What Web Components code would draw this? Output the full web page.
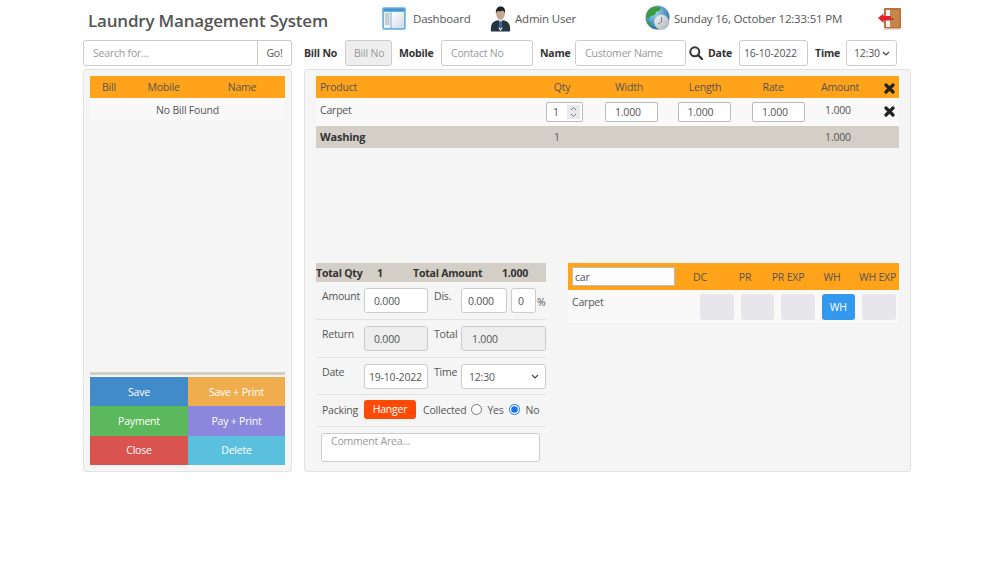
<!DOCTYPE html>
<html>
<head>
<meta charset="utf-8">
<title>Laundry Management System</title>
<style>
    body {
        margin: 0;
        background: #fff;
        color: #555;
        font: 10.5px "Open Sans", "Liberation Sans", sans-serif;
        letter-spacing: -.2px;
    }
</style>
</head>
<body>
<laundry-app></laundry-app>

<script>
// shared by every shadow root that holds form fields
const chevron = `url("data:image/svg+xml,%3Csvg xmlns='http://www.w3.org/2000/svg' width='8' height='5'%3E%3Cpath d='M1 1l3 3 3-3' fill='none' stroke='%23444' stroke-width='1.2'/%3E%3C/svg%3E")`;

const fieldCss = `
    * { box-sizing: border-box; }
    input, select, textarea {
        font: inherit;
        letter-spacing: inherit;
        color: #555;
        background: #fff;
        border: 1px solid #ccc;
        border-radius: 3px;
        height: 25px;
        padding: 0 9px;
        margin: 0;
        outline: none;
    }
    select {
        appearance: none;
        padding: 0 4px 0 7px;
        background: #fff ${chevron} no-repeat right 6px center;
    }
    input::placeholder, textarea::placeholder { color: #999; opacity: 1; }
    input:disabled { background: #eee; }
`;

const icons = {
    dashboard: `<svg width="24" height="23" viewBox="0 0 24 23">
        <defs><linearGradient id="d" x1="0" y1="0" x2="1" y2="1"><stop offset="0" stop-color="#fff"/><stop offset="1" stop-color="#cfdbe6"/></linearGradient></defs>
        <rect x=".5" y=".5" width="23" height="22" rx="1.5" fill="#6fb3e0" stroke="#8fc3e6"/>
        <rect x="1.5" y="1.5" width="21" height="2.5" fill="#3f97d6"/>
        <rect x="2" y="5" width="6.5" height="16" fill="#eef3f6"/>
        <rect x="9.5" y="5" width="12.5" height="16" fill="url(#d)"/>
        <path d="M3 7h4.5M3 9h4.5M3 11h4.5M3 13h4.5M3 15h4.5M3 17h4.5" stroke="#9aa7b2" stroke-width="1"/>
    </svg>`,
    user: `<svg width="21" height="26" viewBox="0 0 21 26">
        <path d="M1 25.5c-.6-6 .8-9.6 5.6-11l3.900-1 3.900 1c4.800 1.400 6.200 5 5.600 11z" fill="#26343f"/>
        <path d="M8 13.500h5l-1.600 3 1 6-1.900 2.500-1.900-2.500 1-6z" fill="#dfe7ee"/>
        <path d="M9.600 15h1.800l.6 6-1.500 2-1.500-2z" fill="#2a5f8f"/>
        <ellipse cx="10.500" cy="8" rx="4.300" ry="5.500" fill="#c9a58c"/>
        <path d="M6 8c-.8-5 1.500-7.500 4.700-7.500S15.800 3 15 8c-.5-2-1.200-3-2.200-3.400-1.700.7-3.900.7-5 .4C6.700 5.500 6.300 6.500 6 8z" fill="#1d2226"/>
    </svg>`,
    globe: `<svg width="26" height="26" viewBox="0 0 26 26">
        <defs>
            <radialGradient id="g" cx=".4" cy=".3" r=".8"><stop offset="0" stop-color="#9fd6ee"/><stop offset="1" stop-color="#15609f"/></radialGradient>
            <linearGradient id="c" x1="0" y1="0" x2="1" y2="1"><stop offset="0" stop-color="#f4f6f7"/><stop offset="1" stop-color="#a9b2b8"/></linearGradient>
        </defs>
        <circle cx="12.5" cy="12.5" r="12" fill="url(#g)"/>
        <path d="M7 2.500c3-1 7-1 9 .5l-2 3-3 1-1 3-4 1-3 3-1.500-2C1.500 8 3.500 4 7 2.500zM2 16l3 1 1 4 2 2.500C5 22.500 3 19.500 2 16z" fill="#3f9a3c"/>
        <circle cx="16.500" cy="17" r="7.500" fill="url(#c)" stroke="#9aa3a9" stroke-width=".5"/>
        <path d="M16.500 12v5l-3.500 2" fill="none" stroke="#7d868c" stroke-width="1"/>
    </svg>`,
    door: `<svg width="24" height="24" viewBox="0 0 24 24">
        <rect x="6" y="1" width="17" height="20.500" rx="1" fill="#b8713a"/>
        <rect x="8" y="3" width="4" height="17" fill="#eceff0"/>
        <path d="M12 3h9.500v17H12z" fill="#c98449"/>
        <circle cx="14.500" cy="12" r="1" fill="#6d3f1b"/>
        <path d="M0 11l5.500-4.500V9H13v4.500H5.500V16z" fill="#e3202b"/>
        <path d="M5 22.500h18" stroke="#ddd" stroke-width="1"/>
    </svg>`,
    search: `<svg width="14" height="14" viewBox="0 0 14 14">
        <circle cx="5.800" cy="5.800" r="4.500" fill="none" stroke="#333" stroke-width="2"/>
        <path d="M9 9l4 4" stroke="#333" stroke-width="2.400" stroke-linecap="round"/>
    </svg>`,
    cross: `<svg width="11" height="11" viewBox="0 0 11 11">
        <path d="M2 2l7 7M9 2l-7 7" stroke="#222" stroke-width="3.200" stroke-linecap="round"/>
    </svg>`
};

class AppHeader extends HTMLElement {
    connectedCallback() {
        this.attachShadow({ mode: 'open' }).innerHTML = `
            <style>
                :host {
                    display: flex;
                    align-items: center;
                    height: 40px;
                    padding-left: 5px;
                    font-size: 11.5px;
                    color: #555;
                }
                h1 {
                    margin: 0;
                    width: 294px;
                    font-size: 17px;
                    font-weight: 600;
                    letter-spacing: -.2px;
                    color: #555;
                    white-space: nowrap;
                }
                .item { display: flex; align-items: center; white-space: nowrap; }
                .item svg { display: block; flex: none; }
                .dash { width: 108px; gap: 7px; margin-top: -3px; }
                .user { width: 155px; gap: 4px; margin-top: -3px; }
                .clock { width: 233px; gap: 3px; margin-top: -4px; }
                .door { margin-top: -3px; }
            </style>
            <h1>Laundry Management System</h1>
            <div class="item dash">${icons.dashboard}<span>Dashboard</span></div>
            <div class="item user">${icons.user}<span>Admin User</span></div>
            <div class="item clock">${icons.globe}<span>Sunday 16, October 12:33:51 PM</span></div>
            <div class="item door">${icons.door}</div>
        `;
    }
}

class FilterBar extends HTMLElement {
    connectedCallback() {
        this.attachShadow({ mode: 'open' }).innerHTML = `
            <style>
                ${fieldCss}
                :host {
                    display: flex;
                    align-items: center;
                    height: 26px;
                }
                .search { display: flex; width: 209px; margin-right: 12px; }
                .search input { flex: 1; min-width: 0; border-radius: 3px 0 0 3px; height: 26px; }
                .go {
                    width: 34px;
                    height: 26px;
                    border: 1px solid #ccc;
                    border-left: 0;
                    border-radius: 0 3px 3px 0;
                    text-align: center;
                    line-height: 24px;
                }
                b { color: #333; white-space: nowrap; flex: none; }
                input, select { height: 26px; flex: none; }
                svg { display: block; flex: none; margin: 0 5px 0 3px; }
            </style>
            <div class="search"><input placeholder="Search for..."><div class="go">Go!</div></div>
            <b style="width:41px">Bill No</b>
            <input disabled placeholder="Bill No" style="width:47px;margin-right:7px;padding:0 0 0 8px">
            <b style="width:42px">Mobile</b>
            <input placeholder="Contact No" style="width:92px;margin-right:7px">
            <b style="width:35px">Name</b>
            <input placeholder="Customer Name" style="width:111px">
            ${icons.search}
            <b style="width:31px">Date</b>
            <input value="16-10-2022" style="width:69px;padding:0 4px;margin-right:7px">
            <b style="width:31px">Time</b>
            <select style="width:51px"><option>12:30</option></select>
        `;
    }
}

class ActionButton extends HTMLElement {
    connectedCallback() {
        this.attachShadow({ mode: 'open' }).innerHTML = `
            <style>
                :host {
                    display: flex;
                    align-items: center;
                    justify-content: center;
                    color: #fff;
                    background: var(--bg);
                }
            </style>
            <slot></slot>
        `;
    }
}

class BillList extends HTMLElement {
    connectedCallback() {
        this.attachShadow({ mode: 'open' }).innerHTML = `
            <style>
                * { box-sizing: border-box; }
                :host {
                    display: flex;
                    flex-direction: column;
                    width: 209px;
                    padding: 6px 6px 6px;
                    background: #f5f5f5;
                    border: 1px solid #e3e3e3;
                    border-radius: 3px;
                }
                .head, .empty { width: 195px; }
                .head {
                    display: grid;
                    grid-template-columns: 38px 71px 86px;
                    height: 22px;
                    line-height: 22px;
                    text-align: center;
                    background: #ffa31a;
                }
                .empty {
                    height: 22px;
                    line-height: 24px;
                    text-align: center;
                    background: #f9f9f9;
                }
                .spacer { flex: 1; }
                hr {
                    width: 195px;
                    height: 3px;
                    margin: 0 0 2px;
                    border: 0;
                    background: #d3cfc7;
                }
                .actions {
                    display: grid;
                    grid-template-columns: 98px 97px;
                    grid-auto-rows: 29.33px;
                }
            </style>
            <div class="head"><span>Bill</span><span>Mobile</span><span>Name</span></div>
            <div class="empty">No Bill Found</div>
            <div class="spacer"></div>
            <hr>
            <div class="actions">
                <action-button style="--bg:#428bca">Save</action-button>
                <action-button style="--bg:#f0ad4e">Save + Print</action-button>
                <action-button style="--bg:#5cb85c">Payment</action-button>
                <action-button style="--bg:#8a87dc">Pay + Print</action-button>
                <action-button style="--bg:#d9534f">Close</action-button>
                <action-button style="--bg:#5bc0de">Delete</action-button>
            </div>
        `;
    }
}

class ProductTable extends HTMLElement {
    connectedCallback() {
        this.attachShadow({ mode: 'open' }).innerHTML = `
            <style>
                ${fieldCss}
                :host { display: block; }
                .row {
                    display: grid;
                    grid-template-columns: 224px 44px 90px 62px 74px 60px 29px;
                    align-items: center;
                    text-align: center;
                }
                .row > :first-child { text-align: left; padding-left: 4px; }
                .row > :last-child { text-align: right; padding-right: 4px; }
                .row svg { display: inline-block; vertical-align: middle; }
                .head { height: 22px; background: #ffa31a; }
                .item { height: 28px; background: #f9f9f9; }
                .total { height: 22px; background: #d3cfc7; }
                .total > * { margin-top: -1px; }
                .total b { color: #333; font-size: 11px; }
                .item input {
                    width: 53px;
                    height: 20px;
                    padding: 0 0 0 9px;
                    border: 1px solid #bbb;
                    border-radius: 2px;
                    vertical-align: middle;
                }
                .item > span { margin-top: -4px; }
                .qty {
                    display: flex;
                    align-items: center;
                    justify-content: space-between;
                    width: 37px;
                    height: 20px;
                    margin-left: 6px;
                    padding: 0 2px 0 6px;
                    border: 1px solid #bbb;
                    border-radius: 2px;
                    background: #fff;
                }
                .spin { display: block; background: #e9e9ed; }
            </style>
            <div class="row head">
                <span>Product</span><span>Qty</span><span>Width</span><span>Length</span><span>Rate</span><span>Amount</span><span>${icons.cross}</span>
            </div>
            <div class="row item">
                <span>Carpet</span>
                <div class="qty"><span>1</span>
                    <svg class="spin" width="13" height="14" viewBox="0 0 13 14"><path d="M4 5l2.500-2.500L9 5M4 9l2.500 2.500L9 9" fill="none" stroke="#777" stroke-width="1"/></svg>
                </div>
                <div><input value="1.000" style="margin-left:5px"></div>
                <div><input value="1.000" style="margin-left:-2px"></div>
                <div><input value="1.000" style="margin-left:11px"></div>
                <span style="padding-right:4px">1.000</span>
                <span>${icons.cross}</span>
            </div>
            <div class="row total">
                <b>Washing</b><span style="padding-right:10px">1</span><span></span><span></span><span></span><span style="padding-right:4px">1.000</span><span></span>
            </div>
        `;
    }
}

class BillSummary extends HTMLElement {
    connectedCallback() {
        this.attachShadow({ mode: 'open' }).innerHTML = `
            <style>
                ${fieldCss}
                :host { display: block; width: 230px; }
                .totals {
                    display: flex;
                    align-items: center;
                    height: 19px;
                    background: #d3cfc7;
                    color: #333;
                    font-weight: 700;
                    white-space: nowrap;
                }
                .row {
                    display: flex;
                    height: 38px;
                    padding: 6px 0 0 6px;
                    border-bottom: 1px solid #e3e3e3;
                }
                .row > label { padding-top: 1px; flex: none; }
                .row > input, .row > select { flex: none; }
                .l1 { width: 42px; }
                .l2 { width: 27px; margin-left: 6px; }
                .f1 { width: 64px; }
                .packing { height: 32px; padding: 0 0 2px 6px; align-items: center; }
                .packing > label { padding-top: 0; }
                .hanger {
                    flex: none;
                    width: 52px;
                    height: 19px;
                    margin-right: 7px;
                    line-height: 19px;
                    text-align: center;
                    color: #fff;
                    background: #ff4a06;
                    border-radius: 3px;
                }
                .packing input {
                    width: 11px;
                    height: 11px;
                    margin: 0 5px 0 5px;
                    padding: 0;
                    accent-color: #1a73e8;
                }
                .packing input:last-of-type { margin-right: 6px; }
                textarea {
                    display: block;
                    width: 219px;
                    height: 29px;
                    margin: 6px 0 0 5px;
                    padding: 0 9px;
                    resize: none;
                    overflow: hidden;
                }
            </style>
            <div class="totals">
                <span style="width:61px">Total Qty</span>
                <span style="width:36px">1</span>
                <span style="width:89px">Total Amount</span>
                <span>1.000</span>
            </div>
            <div class="row">
                <label class="l1">Amount</label>
                <input class="f1" value="0.000">
                <label class="l2">Dis.</label>
                <input value="0.000" style="width:46px;padding:0 6px">
                <input value="0" style="width:25px;margin-left:4px;padding:0 6px">
                <span style="margin:7px 0 0 1px">%</span>
            </div>
            <div class="row">
                <label class="l1">Return</label>
                <input class="f1" disabled value="0.000">
                <label class="l2">Total</label>
                <input disabled value="1.000" style="width:85px;padding:0 10px">
            </div>
            <div class="row" style="height:37px">
                <label class="l1">Date</label>
                <input class="f1" value="19-10-2022" style="padding:0 4px">
                <label class="l2">Time</label>
                <select style="width:85px"><option>12:30</option></select>
            </div>
            <div class="row packing">
                <label class="l1">Packing</label>
                <div class="hanger">Hanger</div>
                <span>Collected</span>
                <input type="radio" name="collected"><span>Yes</span>
                <input type="radio" name="collected" checked><span>No</span>
            </div>
            <textarea placeholder="Comment Area..."></textarea>
        `;
    }
}

class ServicePicker extends HTMLElement {
    connectedCallback() {
        this.attachShadow({ mode: 'open' }).innerHTML = `
            <style>
                ${fieldCss}
                :host { display: block; width: 331px; }
                .head {
                    display: grid;
                    grid-template-columns: 110px 44px 46px 40px 48px 43px;
                    align-items: center;
                    height: 27px;
                    text-align: center;
                    white-space: nowrap;
                    background: #ffa31a;
                }
                .head input {
                    width: 103px;
                    height: 19px;
                    margin-left: 4px;
                    padding: 0 2px;
                    border: 1px solid #bbb;
                    border-radius: 1px;
                    display: block;
                }
                .row {
                    display: flex;
                    gap: 7px;
                    height: 33px;
                    padding: 4px 0 0 4px;
                    background: #f9f9f9;
                }
                .row span { width: 121px; margin-top: 1px; }
                .opt {
                    width: 33.5px;
                    height: 26px;
                    line-height: 26px;
                    text-align: center;
                    background: #e7e7eb;
                    border-radius: 3px;
                }
                .on { color: #fff; background: #3399ee; }
            </style>
            <div class="head">
                <input value="car"><span>DC</span><span>PR</span><span>PR EXP</span><span>WH</span><span>WH EXP</span>
            </div>
            <div class="row">
                <span>Carpet</span>
                <div class="opt"></div><div class="opt"></div><div class="opt"></div><div class="opt on">WH</div><div class="opt"></div>
            </div>
        `;
    }
}

class BillEditor extends HTMLElement {
    connectedCallback() {
        this.attachShadow({ mode: 'open' }).innerHTML = `
            <style>
                * { box-sizing: border-box; }
                :host {
                    display: flex;
                    flex-direction: column;
                    width: 607px;
                    padding: 6px 11px 9px;
                    background: #f5f5f5;
                    border: 1px solid #e3e3e3;
                    border-radius: 3px;
                }
                product-table { flex: 1; }
                .lower {
                    display: flex;
                    justify-content: space-between;
                    align-items: flex-start;
                }
            </style>
            <product-table></product-table>
            <div class="lower">
                <bill-summary></bill-summary>
                <service-picker></service-picker>
            </div>
        `;
    }
}

class LaundryApp extends HTMLElement {
    connectedCallback() {
        this.attachShadow({ mode: 'open' }).innerHTML = `
            <style>
                :host { display: block; width: 828px; margin-left: 83px; }
                .panels {
                    display: flex;
                    gap: 12px;
                    height: 403px;
                    margin-top: 3px;
                }
            </style>
            <app-header></app-header>
            <filter-bar></filter-bar>
            <div class="panels">
                <bill-list></bill-list>
                <bill-editor></bill-editor>
            </div>
        `;
    }
}

customElements.define('app-header', AppHeader);
customElements.define('filter-bar', FilterBar);
customElements.define('action-button', ActionButton);
customElements.define('bill-list', BillList);
customElements.define('product-table', ProductTable);
customElements.define('bill-summary', BillSummary);
customElements.define('service-picker', ServicePicker);
customElements.define('bill-editor', BillEditor);
customElements.define('laundry-app', LaundryApp);
</script>
</body>
</html>
